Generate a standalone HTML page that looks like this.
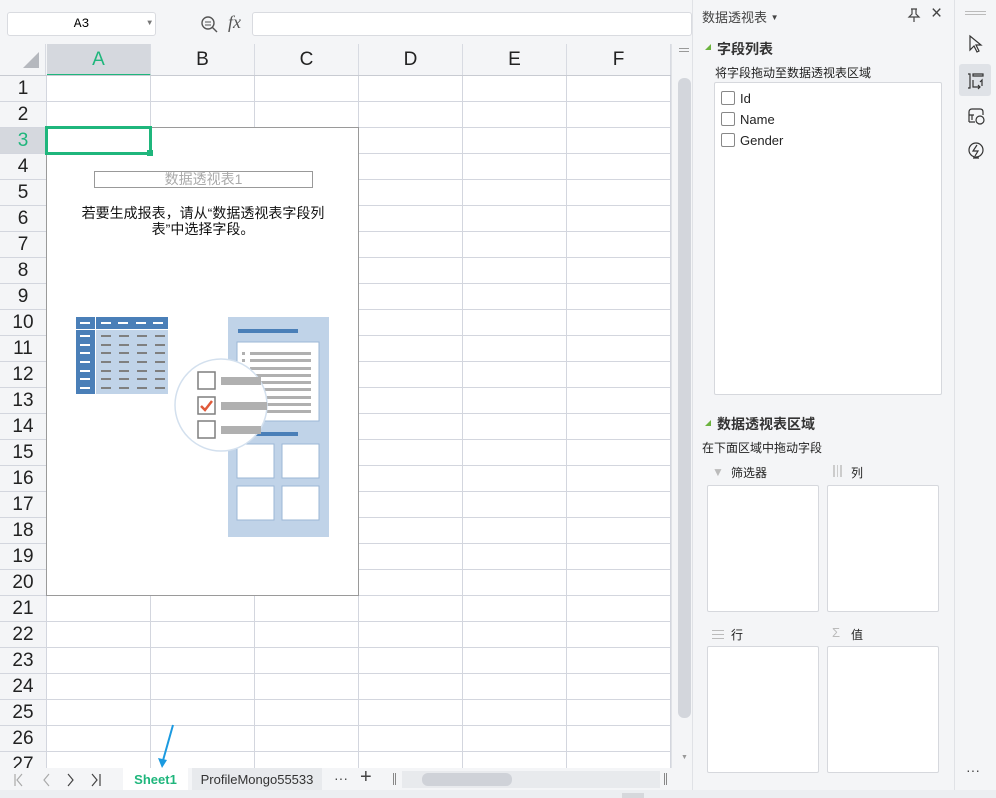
<!DOCTYPE html>
<html><head><meta charset="utf-8"><style>
*{margin:0;padding:0;box-sizing:border-box}
body{width:996px;height:798px;position:relative;overflow:hidden;background:#f4f5f7;font-family:"Liberation Sans","Noto Sans CJK SC",sans-serif}
.a{position:absolute}
.grid{left:46px;top:76px;width:625px;height:692px;background:#fff;
background-image:linear-gradient(to right,#d3d6de 1px,transparent 1px),linear-gradient(to bottom,#d3d6de 1px,transparent 1px);
background-size:104px 26px;background-position:104px 25px}
.rh{left:0;width:46px;height:26px;font-size:19px;text-align:center;line-height:26px;color:#222;border-bottom:1px solid #d3d6de;background:#f4f5f7}
.ch{top:44px;width:104px;height:32px;font-size:19px;text-align:center;line-height:32px;color:#222;border-right:1px solid #d8dbe2;background:#f4f5f7}
.box{background:#fff;border:1px solid #d6d8dd;border-radius:2px}
.cb{display:inline-block;width:14px;height:14px;border:1px solid #888;border-radius:2px;vertical-align:-2px;margin-right:5px;background:#fff}
</style></head><body>
<div class="a" style="left:7px;top:12px;width:149px;height:24px;background:#fff;border:1px solid #d9dbe0;border-radius:3px;font-family:'Liberation Mono',monospace;font-size:13px;text-align:center;line-height:22px">A3<span class="a" style="right:3px;top:0;font-size:8px;color:#777">▼</span></div>
<svg class="a" style="left:200px;top:15px" width="20" height="20"><circle cx="8" cy="8" r="6" fill="none" stroke="#555" stroke-width="1.4"/><line x1="5" y1="7" x2="11" y2="7" stroke="#555"/><line x1="5" y1="10" x2="11" y2="10" stroke="#555"/><line x1="12.5" y1="12.5" x2="17" y2="17" stroke="#555" stroke-width="1.4"/></svg>
<div class="a" style="left:228px;top:12px;font-family:'Liberation Serif',serif;font-style:italic;font-size:18px;color:#555">fx</div>
<div class="a" style="left:252px;top:12px;width:440px;height:24px;background:#fff;border:1px solid #d9dbe0;border-radius:3px"></div>
<div class="a" style="left:0;top:44px;width:46px;height:32px;background:#f4f5f7;border-right:1px solid #d8dbe2"></div>
<div class="a" style="left:23px;top:52px;width:0;height:0;border-left:16px solid transparent;border-bottom:16px solid #b5b8be"></div>
<div class="a ch" style="left:47px;background:#d5d8de;color:#1fb67c;border-bottom:2px solid #1fb67c">A</div>
<div class="a ch" style="left:151px">B</div>
<div class="a ch" style="left:255px">C</div>
<div class="a ch" style="left:359px">D</div>
<div class="a ch" style="left:463px">E</div>
<div class="a ch" style="left:567px">F</div>
<div class="a" style="left:0;top:75px;width:671px;height:1px;background:#c8cbd2"></div>
<div class="a grid"></div>
<div class="a" style="left:0;top:76px;width:46px;height:692px;border-right:1px solid #c8cbd2;background:#f4f5f7">
<div class="rh">1</div><div class="rh">2</div><div class="rh" style="background:#d5d8de;color:#1fb67c">3</div><div class="rh">4</div><div class="rh">5</div><div class="rh">6</div><div class="rh">7</div><div class="rh">8</div><div class="rh">9</div><div class="rh">10</div><div class="rh">11</div><div class="rh">12</div><div class="rh">13</div><div class="rh">14</div><div class="rh">15</div><div class="rh">16</div><div class="rh">17</div><div class="rh">18</div><div class="rh">19</div><div class="rh">20</div><div class="rh">21</div><div class="rh">22</div><div class="rh">23</div><div class="rh">24</div><div class="rh">25</div><div class="rh">26</div><div class="rh">27</div>
</div>
<div class="a" style="left:46px;top:127px;width:313px;height:469px;background:#fff;border:1px solid #9a9a9a"></div>
<div class="a" style="left:45px;top:126px;width:107px;height:29px;border:3px solid #1fb67c"></div>
<div class="a" style="left:147px;top:150px;width:6px;height:6px;background:#1fb67c"></div>
<div class="a" style="left:94px;top:171px;width:219px;height:17px;border:1px solid #999;font-size:14px;color:#aaa;text-align:center;line-height:15px">数据透视表1</div>
<div class="a" style="left:70px;top:205px;width:266px;font-size:14px;color:#111;text-align:center;line-height:16px">若要生成报表，请从“数据透视表字段列表”中选择字段。</div>
<svg class="a" style="left:60px;top:300px" width="280" height="250">
<rect x="16" y="17" width="92" height="77" fill="#c0d3e8"/>
<rect x="16" y="17" width="92" height="12" fill="#4a7fb8"/>
<rect x="16" y="17" width="19" height="77" fill="#4a7fb8"/>
<line x1="35.5" y1="17" x2="35.5" y2="94" stroke="#fff"/><line x1="16" y1="29.5" x2="108" y2="29.5" stroke="#fff"/>
<g fill="#fff"><rect x="20" y="22" width="10" height="2"/><rect x="41" y="22" width="10" height="2"/><rect x="58" y="22" width="10" height="2"/><rect x="76" y="22" width="10" height="2"/><rect x="93" y="22" width="10" height="2"/>
<rect x="20" y="35" width="10" height="2"/><rect x="20" y="44" width="10" height="2"/><rect x="20" y="52" width="10" height="2"/><rect x="20" y="61" width="10" height="2"/><rect x="20" y="70" width="10" height="2"/><rect x="20" y="78" width="10" height="2"/><rect x="20" y="87" width="10" height="2"/></g>
<g stroke="#7f7f7f" stroke-width="2" stroke-dasharray="10 8"><line x1="41" y1="36" x2="108" y2="36"/><line x1="41" y1="45" x2="108" y2="45"/><line x1="41" y1="53" x2="108" y2="53"/><line x1="41" y1="62" x2="108" y2="62"/><line x1="41" y1="71" x2="108" y2="71"/><line x1="41" y1="79" x2="108" y2="79"/><line x1="41" y1="88" x2="108" y2="88"/></g>
<rect x="168" y="17" width="101" height="220" fill="#c0d3e8"/>
<rect x="178" y="29" width="60" height="4" fill="#4a7fb8"/>
<rect x="177" y="42" width="82" height="79" fill="#fff" stroke="#9bb7d6"/>
<g fill="#b0b0b0"><rect x="190" y="52" width="61" height="3"/><rect x="190" y="59" width="61" height="3"/><rect x="190" y="67" width="61" height="3"/><rect x="190" y="74" width="61" height="3"/><rect x="190" y="81" width="61" height="3"/><rect x="190" y="88" width="61" height="3"/><rect x="190" y="96" width="61" height="3"/><rect x="190" y="103" width="61" height="3"/><rect x="190" y="110" width="61" height="3"/><rect x="182" y="52" width="3" height="3"/><rect x="182" y="59" width="3" height="3"/></g>
<rect x="178" y="132" width="60" height="4" fill="#4a7fb8"/>
<g fill="#fff" stroke="#9bb7d6"><rect x="177" y="144" width="37" height="34"/><rect x="222" y="144" width="37" height="34"/><rect x="177" y="186" width="37" height="34"/><rect x="222" y="186" width="37" height="34"/></g>
<circle cx="161" cy="105" r="46" fill="#fff" stroke="#d3e0ee" stroke-width="1.5"/>
<g fill="#fff" stroke="#7f7f7f" stroke-width="1.5"><rect x="138" y="72" width="17" height="17"/><rect x="138" y="97" width="17" height="17"/><rect x="138" y="121" width="17" height="17"/></g>
<path d="M141 106 L145 110 L152 101" fill="none" stroke="#e05a3a" stroke-width="2.5"/>
<g fill="#b0b0b0"><rect x="161" y="77" width="40" height="8"/><rect x="161" y="102" width="46" height="8"/><rect x="161" y="126" width="40" height="8"/></g>
</svg>
<div class="a" style="left:671px;top:44px;width:21px;height:724px;background:#f4f5f7;border-left:1px solid #e0e2e6"></div>
<div class="a" style="left:679px;top:48px;width:10px;height:1px;background:#999"></div><div class="a" style="left:679px;top:51px;width:10px;height:1px;background:#999"></div>
<div class="a" style="left:678px;top:78px;width:13px;height:640px;background:#d3d6dc;border-radius:6px"></div>
<div class="a" style="left:681px;top:754px;font-size:7px;color:#999">▼</div>
<div class="a" style="left:0;top:768px;width:692px;height:22px;background:#f4f5f7"></div>
<svg class="a" style="left:8px;top:771px" width="100" height="18">
<path d="M7 3 V15 M14 3 L9 9 L14 15" fill="none" stroke="#aaa" stroke-width="1.2"/>
<path d="M41 3 L36 9 L41 15" fill="none" stroke="#aaa" stroke-width="1.2"/>
<path d="M60 3 L65 9 L60 15" fill="none" stroke="#444" stroke-width="1.2"/>
<path d="M84 3 L89 9 L84 15 M92 3 V15" fill="none" stroke="#444" stroke-width="1.2"/>
</svg>
<div class="a" style="left:123px;top:768px;width:65px;height:22px;background:#fff;color:#1fb67c;font-weight:bold;font-size:13px;text-align:center;line-height:24px">Sheet1</div>
<div class="a" style="left:192px;top:768px;width:130px;height:22px;background:#e8eaed;color:#333;font-size:13px;text-align:center;line-height:24px">ProfileMongo55533</div>
<div class="a" style="left:334px;top:770px;font-size:14px;color:#444">···</div>
<div class="a" style="left:360px;top:766px;font-size:20px;color:#444">+</div>
<div class="a" style="left:393px;top:773px;width:3px;height:12px;border-left:1px solid #888;border-right:1px solid #888"></div>
<div class="a" style="left:402px;top:771px;width:258px;height:17px;background:#e8eaed"></div>
<div class="a" style="left:422px;top:773px;width:90px;height:13px;background:#cfd2d8;border-radius:6px"></div>
<div class="a" style="left:664px;top:773px;width:3px;height:12px;border-left:1px solid #888;border-right:1px solid #888"></div>
<svg class="a" style="left:155px;top:722px" width="22" height="50"><line x1="18" y1="3" x2="7" y2="42" stroke="#1b9ae0" stroke-width="2"/><path d="M3 36 L7 46 L12 38 Z" fill="#1b9ae0"/></svg>
<div class="a" style="left:0;top:790px;width:996px;height:8px;background:#eceef1"></div>
<div class="a" style="left:622px;top:793px;width:22px;height:5px;background:#d6d8dc"></div>
<div class="a" style="left:692px;top:0;width:262px;height:790px;background:#f4f5f7;border-left:1px solid #e0e2e6"></div>
<div class="a" style="left:702px;top:7px;font-size:13px;color:#444">数据透视表 <span style="font-size:8px;vertical-align:2px">▼</span></div>
<svg class="a" style="left:906px;top:7px" width="16" height="16"><path d="M5 2 H11 M6 2 V7 L3 10 H13 L10 7 V2 M8 10 V15" fill="none" stroke="#444" stroke-width="1.2"/></svg>
<div class="a" style="left:931px;top:3px;font-size:19px;color:#444">×</div>
<div class="a" style="left:705px;top:44px;width:0;height:0;border-left:6px solid transparent;border-bottom:6px solid #6cb33f"></div>
<div class="a" style="left:717px;top:39px;font-size:14px;font-weight:bold;color:#333">字段列表</div>
<div class="a" style="left:715px;top:64px;font-size:12px;color:#222">将字段拖动至数据透视表区域</div>
<div class="a box" style="left:714px;top:82px;width:228px;height:313px;padding:5px 0 0 6px;font-size:13px;color:#222;line-height:21px">
<div><span class="cb"></span>Id</div><div><span class="cb"></span>Name</div><div><span class="cb"></span>Gender</div></div>
<div class="a" style="left:705px;top:420px;width:0;height:0;border-left:6px solid transparent;border-bottom:6px solid #6cb33f"></div>
<div class="a" style="left:717px;top:414px;font-size:14px;font-weight:bold;color:#333">数据透视表区域</div>
<div class="a" style="left:702px;top:439px;font-size:12px;color:#222">在下面区域中拖动字段</div>
<div class="a" style="left:712px;top:465px;font-size:12px;color:#bbb">▼</div>
<div class="a" style="left:731px;top:464px;font-size:12px;color:#222">筛选器</div>
<div class="a" style="left:833px;top:465px;width:9px;height:12px;border-left:2px solid #ccc;border-right:2px solid #ccc"><div style="margin-left:2px;width:1px;height:12px;background:#ccc"></div></div>
<div class="a" style="left:851px;top:464px;font-size:12px;color:#222">列</div>
<div class="a box" style="left:707px;top:485px;width:112px;height:127px"></div>
<div class="a box" style="left:827px;top:485px;width:112px;height:127px"></div>
<div class="a" style="left:712px;top:630px;width:12px;height:9px;border-top:1px solid #bbb;border-bottom:1px solid #bbb"><div style="margin-top:3px;height:1px;background:#bbb"></div></div>
<div class="a" style="left:731px;top:626px;font-size:12px;color:#222">行</div>
<div class="a" style="left:832px;top:625px;font-size:13px;color:#bbb">Σ</div>
<div class="a" style="left:851px;top:626px;font-size:12px;color:#222">值</div>
<div class="a box" style="left:707px;top:646px;width:112px;height:127px"></div>
<div class="a box" style="left:827px;top:646px;width:112px;height:127px"></div>
<div class="a" style="left:954px;top:0;width:42px;height:790px;background:#f4f5f7;border-left:1px solid #e0e2e6"></div>
<div class="a" style="left:965px;top:11px;width:21px;height:4px;border-top:1px solid #bbb;border-bottom:1px solid #bbb"></div>
<svg class="a" style="left:966px;top:34px" width="20" height="20"><path d="M4 2 L4 16 L8 12 L11 18 L13 17 L10 11 L15 11 Z" fill="none" stroke="#333" stroke-width="1.2"/></svg>
<div class="a" style="left:959px;top:64px;width:32px;height:32px;background:#dfe2e7;border-radius:3px"></div>
<svg class="a" style="left:966px;top:71px" width="20" height="20"><path d="M2 3 H4 V17 H2 M7 3 H17 V5 H7 Z M7 9 V16 H14 M12 14 L14 16 L12 18 M16 15 V9 L14 11" fill="none" stroke="#333" stroke-width="1.2"/></svg>
<svg class="a" style="left:966px;top:106px" width="20" height="20"><path d="M3 16 V6 Q3 3 6 3 H14 Q17 3 17 6 V9 M3 9 H8 M3 16 H9 M6 9 V14" fill="none" stroke="#333" stroke-width="1.2"/><circle cx="14" cy="14" r="4" fill="none" stroke="#333" stroke-width="1.2"/></svg>
<svg class="a" style="left:966px;top:141px" width="20" height="22"><circle cx="10" cy="9" r="7" fill="none" stroke="#333" stroke-width="1.2"/><path d="M11 4 L7 10 H12 L9 15 M7 17 H13" fill="none" stroke="#333" stroke-width="1.2"/></svg>
<div class="a" style="left:966px;top:762px;font-size:14px;color:#444">···</div>
</body></html>
